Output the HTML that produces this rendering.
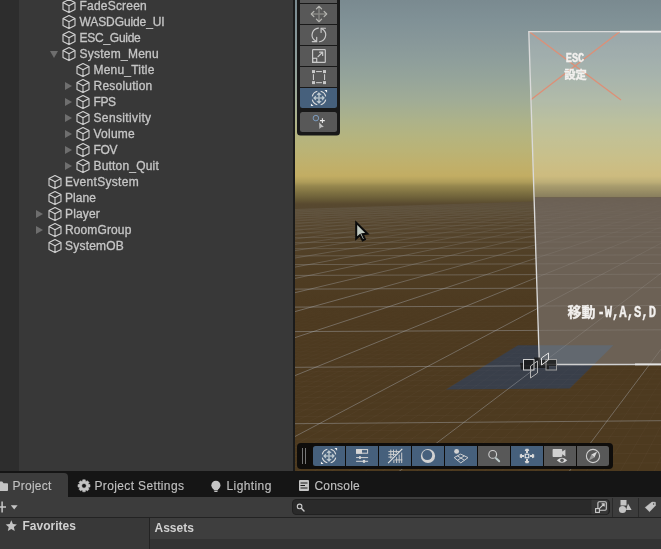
<!DOCTYPE html>
<html><head><meta charset="utf-8"><title>Unity</title>
<style>
html,body{margin:0;padding:0;}
body{width:661px;height:549px;overflow:hidden;background:#383838;position:relative;font-family:"Liberation Sans","Noto Sans CJK JP",sans-serif;font-size:12px;color:#c8c8c8;}
#hier,#tabs,#left,#ahead,#scenewrap{will-change:transform;}
#hier{position:absolute;left:0;top:0;width:293px;height:471px;background:#383838;overflow:hidden;}
#hier .strip{position:absolute;left:0;top:0;width:19px;height:471px;background:#2d2d2d;}
#vdiv{position:absolute;left:293px;top:0;width:2px;height:471px;background:#1b1b1b;}
.row{position:absolute;left:0;width:293px;height:16px;line-height:16px;white-space:nowrap;}
.row span{position:absolute;top:0;}
.row .nm{color:#c6c6c6;-webkit-text-stroke:0.3px #c6c6c6;}
.row .ico{width:16px;height:16px;}
.cube{width:16px;height:16px;display:block;}
.arr{width:0;height:0;}
.arr.r{top:4px !important;border-left:7.25px solid #6e6e6e;border-top:4.25px solid transparent;border-bottom:4.25px solid transparent;}
.arr.d{top:4.75px !important;border-top:7.75px solid #6e6e6e;border-left:4.25px solid transparent;border-right:4.25px solid transparent;}
#scenewrap{position:absolute;left:295px;top:0;width:366px;height:471px;overflow:hidden;}
#scene{display:block;}
#tabs{position:absolute;left:0;top:471px;width:661px;height:26px;background:#151515;}
#tabs .act{position:absolute;left:0;top:2px;width:68px;height:24px;background:#3c3c3c;border-top-right-radius:4px;}
#tabs .t{position:absolute;top:7px;line-height:16px;color:#c0c0c0;-webkit-text-stroke:0.12px #c0c0c0;white-space:nowrap;}
#ptool{position:absolute;left:0;top:497px;width:661px;height:20px;background:#3c3c3c;border-bottom:1px solid #232323;}
#search{position:absolute;left:292px;top:2px;width:316px;height:14px;border:1px solid #212121;border-radius:4px;background:#2a2a2a;}
#left{position:absolute;left:0;top:518px;width:149px;height:31px;background:#383838;}
#vd2{position:absolute;left:149px;top:518px;width:1px;height:31px;background:#232323;}
#ahead{position:absolute;left:150px;top:518px;width:511px;height:21px;background:#3e3e3e;}
#abody{position:absolute;left:150px;top:539px;width:511px;height:10px;background:#333333;}
.b{font-weight:bold;color:#d0d0d0;}
svg.ov{position:absolute;left:0;top:0;pointer-events:none;}
</style></head><body>
<div id="hier"><div class="strip"></div>
<div class="row" style="top:-2px">
<span class="ico" style="left:61.0px"><svg class="cube" viewBox="0 0 16 16"><path d="M8 1.6 L14 4.6 L14 11.4 L8 14.6 L2 11.4 L2 4.6 Z M2 4.6 L8 7.8 L14 4.6 M8 7.8 L8 14.6" fill="none" stroke="#d2d2d2" stroke-width="1.1" stroke-linejoin="round"/></svg></span>
<span class="nm" style="left:79.5px;letter-spacing:0.21px">FadeScreen</span>
</div>
<div class="row" style="top:14px">
<span class="ico" style="left:61.0px"><svg class="cube" viewBox="0 0 16 16"><path d="M8 1.6 L14 4.6 L14 11.4 L8 14.6 L2 11.4 L2 4.6 Z M2 4.6 L8 7.8 L14 4.6 M8 7.8 L8 14.6" fill="none" stroke="#d2d2d2" stroke-width="1.1" stroke-linejoin="round"/></svg></span>
<span class="nm" style="left:79.5px;letter-spacing:-0.1px">WASDGuide_UI</span>
</div>
<div class="row" style="top:30px">
<span class="ico" style="left:61.0px"><svg class="cube" viewBox="0 0 16 16"><path d="M8 1.6 L14 4.6 L14 11.4 L8 14.6 L2 11.4 L2 4.6 Z M2 4.6 L8 7.8 L14 4.6 M8 7.8 L8 14.6" fill="none" stroke="#d2d2d2" stroke-width="1.1" stroke-linejoin="round"/></svg></span>
<span class="nm" style="left:79.5px;letter-spacing:-0.26px">ESC_Guide</span>
</div>
<div class="row" style="top:46px">
<span class="arr d" style="left:49.5px"></span>
<span class="ico" style="left:61.0px"><svg class="cube" viewBox="0 0 16 16"><path d="M8 1.6 L14 4.6 L14 11.4 L8 14.6 L2 11.4 L2 4.6 Z M2 4.6 L8 7.8 L14 4.6 M8 7.8 L8 14.6" fill="none" stroke="#d2d2d2" stroke-width="1.1" stroke-linejoin="round"/></svg></span>
<span class="nm" style="left:79.5px;letter-spacing:0.25px">System_Menu</span>
</div>
<div class="row" style="top:62px">
<span class="ico" style="left:75.0px"><svg class="cube" viewBox="0 0 16 16"><path d="M8 1.6 L14 4.6 L14 11.4 L8 14.6 L2 11.4 L2 4.6 Z M2 4.6 L8 7.8 L14 4.6 M8 7.8 L8 14.6" fill="none" stroke="#d2d2d2" stroke-width="1.1" stroke-linejoin="round"/></svg></span>
<span class="nm" style="left:93.5px;letter-spacing:0.21px">Menu_Title</span>
</div>
<div class="row" style="top:78px">
<span class="arr r" style="left:64.5px"></span>
<span class="ico" style="left:75.0px"><svg class="cube" viewBox="0 0 16 16"><path d="M8 1.6 L14 4.6 L14 11.4 L8 14.6 L2 11.4 L2 4.6 Z M2 4.6 L8 7.8 L14 4.6 M8 7.8 L8 14.6" fill="none" stroke="#d2d2d2" stroke-width="1.1" stroke-linejoin="round"/></svg></span>
<span class="nm" style="left:93.5px;letter-spacing:0.23px">Resolution</span>
</div>
<div class="row" style="top:94px">
<span class="arr r" style="left:64.5px"></span>
<span class="ico" style="left:75.0px"><svg class="cube" viewBox="0 0 16 16"><path d="M8 1.6 L14 4.6 L14 11.4 L8 14.6 L2 11.4 L2 4.6 Z M2 4.6 L8 7.8 L14 4.6 M8 7.8 L8 14.6" fill="none" stroke="#d2d2d2" stroke-width="1.1" stroke-linejoin="round"/></svg></span>
<span class="nm" style="left:93.5px;letter-spacing:-0.45px">FPS</span>
</div>
<div class="row" style="top:110px">
<span class="arr r" style="left:64.5px"></span>
<span class="ico" style="left:75.0px"><svg class="cube" viewBox="0 0 16 16"><path d="M8 1.6 L14 4.6 L14 11.4 L8 14.6 L2 11.4 L2 4.6 Z M2 4.6 L8 7.8 L14 4.6 M8 7.8 L8 14.6" fill="none" stroke="#d2d2d2" stroke-width="1.1" stroke-linejoin="round"/></svg></span>
<span class="nm" style="left:93.5px;letter-spacing:0.36px">Sensitivity</span>
</div>
<div class="row" style="top:126px">
<span class="arr r" style="left:64.5px"></span>
<span class="ico" style="left:75.0px"><svg class="cube" viewBox="0 0 16 16"><path d="M8 1.6 L14 4.6 L14 11.4 L8 14.6 L2 11.4 L2 4.6 Z M2 4.6 L8 7.8 L14 4.6 M8 7.8 L8 14.6" fill="none" stroke="#d2d2d2" stroke-width="1.1" stroke-linejoin="round"/></svg></span>
<span class="nm" style="left:93.5px;letter-spacing:0.24px">Volume</span>
</div>
<div class="row" style="top:142px">
<span class="arr r" style="left:64.5px"></span>
<span class="ico" style="left:75.0px"><svg class="cube" viewBox="0 0 16 16"><path d="M8 1.6 L14 4.6 L14 11.4 L8 14.6 L2 11.4 L2 4.6 Z M2 4.6 L8 7.8 L14 4.6 M8 7.8 L8 14.6" fill="none" stroke="#d2d2d2" stroke-width="1.1" stroke-linejoin="round"/></svg></span>
<span class="nm" style="left:93.5px;letter-spacing:-0.39px">FOV</span>
</div>
<div class="row" style="top:158px">
<span class="arr r" style="left:64.5px"></span>
<span class="ico" style="left:75.0px"><svg class="cube" viewBox="0 0 16 16"><path d="M8 1.6 L14 4.6 L14 11.4 L8 14.6 L2 11.4 L2 4.6 Z M2 4.6 L8 7.8 L14 4.6 M8 7.8 L8 14.6" fill="none" stroke="#d2d2d2" stroke-width="1.1" stroke-linejoin="round"/></svg></span>
<span class="nm" style="left:93.5px;letter-spacing:0.19px">Button_Quit</span>
</div>
<div class="row" style="top:174px">
<span class="ico" style="left:46.5px"><svg class="cube" viewBox="0 0 16 16"><path d="M8 1.6 L14 4.6 L14 11.4 L8 14.6 L2 11.4 L2 4.6 Z M2 4.6 L8 7.8 L14 4.6 M8 7.8 L8 14.6" fill="none" stroke="#d2d2d2" stroke-width="1.1" stroke-linejoin="round"/></svg></span>
<span class="nm" style="left:65.0px;letter-spacing:0.3px">EventSystem</span>
</div>
<div class="row" style="top:190px">
<span class="ico" style="left:46.5px"><svg class="cube" viewBox="0 0 16 16"><path d="M8 1.6 L14 4.6 L14 11.4 L8 14.6 L2 11.4 L2 4.6 Z M2 4.6 L8 7.8 L14 4.6 M8 7.8 L8 14.6" fill="none" stroke="#d2d2d2" stroke-width="1.1" stroke-linejoin="round"/></svg></span>
<span class="nm" style="left:65.0px;letter-spacing:0.06px">Plane</span>
</div>
<div class="row" style="top:206px">
<span class="arr r" style="left:36.0px"></span>
<span class="ico" style="left:46.5px"><svg class="cube" viewBox="0 0 16 16"><path d="M8 1.6 L14 4.6 L14 11.4 L8 14.6 L2 11.4 L2 4.6 Z M2 4.6 L8 7.8 L14 4.6 M8 7.8 L8 14.6" fill="none" stroke="#d2d2d2" stroke-width="1.1" stroke-linejoin="round"/></svg></span>
<span class="nm" style="left:65.0px;letter-spacing:0.16px">Player</span>
</div>
<div class="row" style="top:222px">
<span class="arr r" style="left:36.0px"></span>
<span class="ico" style="left:46.5px"><svg class="cube" viewBox="0 0 16 16"><path d="M8 1.6 L14 4.6 L14 11.4 L8 14.6 L2 11.4 L2 4.6 Z M2 4.6 L8 7.8 L14 4.6 M8 7.8 L8 14.6" fill="none" stroke="#d2d2d2" stroke-width="1.1" stroke-linejoin="round"/></svg></span>
<span class="nm" style="left:65.0px;letter-spacing:0.12px">RoomGroup</span>
</div>
<div class="row" style="top:238px">
<span class="ico" style="left:46.5px"><svg class="cube" viewBox="0 0 16 16"><path d="M8 1.6 L14 4.6 L14 11.4 L8 14.6 L2 11.4 L2 4.6 Z M2 4.6 L8 7.8 L14 4.6 M8 7.8 L8 14.6" fill="none" stroke="#d2d2d2" stroke-width="1.1" stroke-linejoin="round"/></svg></span>
<span class="nm" style="left:65.0px;letter-spacing:0.21px">SystemOB</span>
</div>
</div>
<div id="vdiv"></div>
<div id="scenewrap">
<svg id="scene" width="366" height="471" viewBox="295 0 366 471">
<defs>
<linearGradient id="sky" x1="0" y1="0" x2="0" y2="214" gradientUnits="userSpaceOnUse">
<stop offset="0.0000" stop-color="#7a8a90"/>
<stop offset="0.0935" stop-color="#809196"/>
<stop offset="0.1869" stop-color="#879799"/>
<stop offset="0.2804" stop-color="#8e9e9b"/>
<stop offset="0.3738" stop-color="#96a59a"/>
<stop offset="0.4673" stop-color="#a0ac96"/>
<stop offset="0.5607" stop-color="#acb28a"/>
<stop offset="0.6308" stop-color="#b4b480"/>
<stop offset="0.7009" stop-color="#bab376"/>
<stop offset="0.7710" stop-color="#c0b06b"/>
<stop offset="0.8224" stop-color="#c2ad63"/>
<stop offset="0.8505" stop-color="#af9d5a"/>
<stop offset="0.8692" stop-color="#96874e"/>
<stop offset="0.8879" stop-color="#887a46"/>
<stop offset="0.9019" stop-color="#7d7041"/>
<stop offset="0.9299" stop-color="#695c37"/>
<stop offset="0.9533" stop-color="#58492f"/>
<stop offset="0.9766" stop-color="#56472f"/>
<stop offset="1.0000" stop-color="#56472f"/>
</linearGradient>
<linearGradient id="gnd" x1="0" y1="197" x2="0" y2="471" gradientUnits="userSpaceOnUse">
<stop offset="0.0000" stop-color="#5c4e38"/>
<stop offset="0.0365" stop-color="#5c4e38"/>
<stop offset="0.0584" stop-color="#5a4b34"/>
<stop offset="0.0912" stop-color="#57472f"/>
<stop offset="0.1569" stop-color="#534229"/>
<stop offset="0.2664" stop-color="#4f3d23"/>
<stop offset="0.4489" stop-color="#4d3a20"/>
<stop offset="1.0000" stop-color="#4d3a1f"/>
</linearGradient>
<linearGradient id="fade" x1="0" y1="200" x2="0" y2="300" gradientUnits="userSpaceOnUse">
<stop offset="0" stop-color="#fff" stop-opacity="0.0"/>
<stop offset="0.12" stop-color="#fff" stop-opacity="0.16"/>
<stop offset="0.3" stop-color="#fff" stop-opacity="0.3"/>
<stop offset="0.6" stop-color="#fff" stop-opacity="0.68"/>
<stop offset="1" stop-color="#fff" stop-opacity="1"/>
</linearGradient>
<linearGradient id="fade2" x1="0" y1="290" x2="0" y2="471" gradientUnits="userSpaceOnUse">
<stop offset="0" stop-color="#fff" stop-opacity="0"/>
<stop offset="0.5" stop-color="#fff" stop-opacity="0.7"/>
<stop offset="1" stop-color="#fff" stop-opacity="1"/>
</linearGradient>
<mask id="gm2"><rect x="295" y="205" width="366" height="266" fill="url(#fade2)"/></mask>
<mask id="gm"><rect x="295" y="195" width="366" height="276" fill="url(#fade)"/></mask>
<clipPath id="pc"><polygon points="534.5,197.3 661,197.3 661,365 540,365"/></clipPath>
<clipPath id="gc"><polygon points="295,209 661,197.5 661,471 295,471"/></clipPath>
</defs>
<rect x="295" y="0" width="366" height="214" fill="url(#sky)"/>
<polygon points="295,209 661,197.5 661,471 295,471" fill="url(#gnd)"/>
<polygon points="518,345.2 613.4,345.2 569.6,388.6 446,389.4" fill="#38404e" fill-opacity="0.93"/>
<g clip-path="url(#gc)">
<g mask="url(#gm2)" stroke="#c8c0b4" stroke-opacity="0.045" stroke-width="1" fill="none">
<line x1="295" y1="466.3" x2="661" y2="462.8"/>
<line x1="295" y1="456.7" x2="661" y2="453.3"/>
<line x1="295" y1="447.7" x2="661" y2="444.4"/>
<line x1="295" y1="439.2" x2="661" y2="436.0"/>
<line x1="295" y1="431.2" x2="661" y2="428.1"/>
<line x1="295" y1="416.6" x2="661" y2="413.7"/>
<line x1="295" y1="409.9" x2="661" y2="407.1"/>
<line x1="295" y1="403.6" x2="661" y2="400.9"/>
<line x1="295" y1="397.6" x2="661" y2="394.9"/>
<line x1="295" y1="391.9" x2="661" y2="389.3"/>
<line x1="295" y1="386.5" x2="661" y2="384.0"/>
<line x1="295" y1="381.4" x2="661" y2="378.9"/>
<line x1="295" y1="376.4" x2="661" y2="374.0"/>
<line x1="295" y1="371.8" x2="661" y2="369.4"/>
<line x1="295" y1="363.0" x2="661" y2="360.8"/>
<line x1="295" y1="358.9" x2="661" y2="356.7"/>
<line x1="295" y1="355.0" x2="661" y2="352.9"/>
<line x1="295" y1="351.3" x2="661" y2="349.1"/>
<line x1="295" y1="347.7" x2="661" y2="345.6"/>
<line x1="295" y1="344.2" x2="661" y2="342.2"/>
<line x1="295" y1="340.9" x2="661" y2="338.9"/>
<line x1="295" y1="337.7" x2="661" y2="335.7"/>
<line x1="295" y1="334.6" x2="661" y2="332.7"/>
<line x1="295" y1="328.8" x2="661" y2="326.9"/>
<line x1="295" y1="326.0" x2="661" y2="324.2"/>
<line x1="295" y1="323.4" x2="661" y2="321.6"/>
<line x1="295" y1="320.8" x2="661" y2="319.0"/>
<line x1="295" y1="318.3" x2="661" y2="316.6"/>
<line x1="295" y1="315.9" x2="661" y2="314.2"/>
<line x1="295" y1="313.6" x2="661" y2="311.9"/>
<line x1="295" y1="311.3" x2="661" y2="309.7"/>
<line x1="295" y1="309.2" x2="661" y2="307.6"/>
<line x1="295" y1="305.0" x2="661" y2="303.5"/>
<line x1="295" y1="303.0" x2="661" y2="301.5"/>
<line x1="295" y1="301.1" x2="661" y2="299.6"/>
<line x1="295" y1="299.2" x2="661" y2="297.7"/>
<line x1="295" y1="297.4" x2="661" y2="296.0"/>
<line x1="295" y1="295.7" x2="661" y2="294.2"/>
<line x1="295" y1="294.0" x2="661" y2="292.5"/>
<line x1="295" y1="292.3" x2="661" y2="290.9"/>
<line x1="295" y1="290.7" x2="661" y2="289.3"/>
<line x1="295" y1="2271.2" x2="793.0" y2="173.5"/>
<line x1="295" y1="1864.5" x2="793.0" y2="173.5"/>
<line x1="295" y1="1589.9" x2="793.0" y2="173.5"/>
<line x1="295" y1="1392.0" x2="793.0" y2="173.5"/>
<line x1="295" y1="1242.6" x2="793.0" y2="173.5"/>
<line x1="295" y1="1125.9" x2="793.0" y2="173.5"/>
<line x1="295" y1="1032.1" x2="793.0" y2="173.5"/>
<line x1="295" y1="955.2" x2="793.0" y2="173.5"/>
<line x1="295" y1="890.9" x2="793.0" y2="173.5"/>
<line x1="295" y1="789.5" x2="793.0" y2="173.5"/>
<line x1="295" y1="748.9" x2="793.0" y2="173.5"/>
<line x1="295" y1="713.3" x2="793.0" y2="173.5"/>
<line x1="295" y1="681.8" x2="793.0" y2="173.5"/>
<line x1="295" y1="653.8" x2="793.0" y2="173.5"/>
<line x1="295" y1="628.8" x2="793.0" y2="173.5"/>
<line x1="295" y1="606.2" x2="793.0" y2="173.5"/>
<line x1="295" y1="585.7" x2="793.0" y2="173.5"/>
<line x1="295" y1="567.1" x2="793.0" y2="173.5"/>
<line x1="295" y1="534.5" x2="793.0" y2="173.5"/>
<line x1="295" y1="520.2" x2="793.0" y2="173.5"/>
<line x1="295" y1="506.9" x2="793.0" y2="173.5"/>
<line x1="295" y1="494.6" x2="793.0" y2="173.5"/>
<line x1="295" y1="483.2" x2="793.0" y2="173.5"/>
<line x1="295" y1="472.6" x2="793.0" y2="173.5"/>
<line x1="295" y1="462.7" x2="793.0" y2="173.5"/>
<line x1="295" y1="453.4" x2="793.0" y2="173.5"/>
<line x1="295" y1="444.7" x2="793.0" y2="173.5"/>
<line x1="295" y1="428.8" x2="793.0" y2="173.5"/>
<line x1="295" y1="421.6" x2="793.0" y2="173.5"/>
<line x1="295" y1="414.7" x2="793.0" y2="173.5"/>
<line x1="295" y1="408.2" x2="793.0" y2="173.5"/>
<line x1="295" y1="402.1" x2="793.0" y2="173.5"/>
<line x1="295" y1="396.2" x2="793.0" y2="173.5"/>
<line x1="295" y1="390.7" x2="793.0" y2="173.5"/>
<line x1="295" y1="385.4" x2="793.0" y2="173.5"/>
<line x1="295" y1="380.4" x2="793.0" y2="173.5"/>
<line x1="295" y1="371.0" x2="793.0" y2="173.5"/>
<line x1="295" y1="366.6" x2="793.0" y2="173.5"/>
<line x1="295" y1="362.5" x2="793.0" y2="173.5"/>
<line x1="295" y1="358.4" x2="793.0" y2="173.5"/>
<line x1="295" y1="354.6" x2="793.0" y2="173.5"/>
<line x1="295" y1="350.9" x2="793.0" y2="173.5"/>
<line x1="295" y1="347.4" x2="793.0" y2="173.5"/>
<line x1="295" y1="344.0" x2="793.0" y2="173.5"/>
<line x1="295" y1="340.7" x2="793.0" y2="173.5"/>
<line x1="295" y1="334.5" x2="793.0" y2="173.5"/>
<line x1="295" y1="331.6" x2="793.0" y2="173.5"/>
<line x1="295" y1="328.8" x2="793.0" y2="173.5"/>
<line x1="295" y1="326.1" x2="793.0" y2="173.5"/>
<line x1="295" y1="323.5" x2="793.0" y2="173.5"/>
<line x1="295" y1="320.9" x2="793.0" y2="173.5"/>
<line x1="295" y1="318.5" x2="793.0" y2="173.5"/>
<line x1="295" y1="316.1" x2="793.0" y2="173.5"/>
<line x1="295" y1="313.8" x2="793.0" y2="173.5"/>
<line x1="295" y1="309.4" x2="793.0" y2="173.5"/>
<line x1="295" y1="307.4" x2="793.0" y2="173.5"/>
<line x1="295" y1="305.3" x2="793.0" y2="173.5"/>
<line x1="295" y1="303.4" x2="793.0" y2="173.5"/>
<line x1="295" y1="301.5" x2="793.0" y2="173.5"/>
<line x1="295" y1="299.6" x2="793.0" y2="173.5"/>
<line x1="295" y1="297.8" x2="793.0" y2="173.5"/>
<line x1="295" y1="296.1" x2="793.0" y2="173.5"/>
<line x1="295" y1="294.4" x2="793.0" y2="173.5"/>
<line x1="295" y1="291.1" x2="793.0" y2="173.5"/>
<line x1="295" y1="289.5" x2="793.0" y2="173.5"/>
<line x1="295" y1="288.0" x2="793.0" y2="173.5"/>
<line x1="295" y1="286.5" x2="793.0" y2="173.5"/>
<line x1="295" y1="285.1" x2="793.0" y2="173.5"/>
<line x1="295" y1="283.7" x2="793.0" y2="173.5"/>
<line x1="295" y1="282.3" x2="793.0" y2="173.5"/>
<line x1="295" y1="281.0" x2="793.0" y2="173.5"/>
<line x1="295" y1="279.7" x2="793.0" y2="173.5"/>
<line x1="295" y1="277.1" x2="793.0" y2="173.5"/>
<line x1="295" y1="275.9" x2="793.0" y2="173.5"/>
<line x1="295" y1="274.7" x2="793.0" y2="173.5"/>
<line x1="295" y1="273.6" x2="793.0" y2="173.5"/>
<line x1="295" y1="272.4" x2="793.0" y2="173.5"/>
<line x1="295" y1="271.3" x2="793.0" y2="173.5"/>
<line x1="295" y1="270.2" x2="793.0" y2="173.5"/>
<line x1="295" y1="269.2" x2="793.0" y2="173.5"/>
<line x1="295" y1="268.1" x2="793.0" y2="173.5"/>
</g>
<g mask="url(#gm)" stroke="#a8aab0" stroke-opacity="0.44" stroke-width="1" fill="none">
<line x1="295" y1="423.7" x2="661" y2="420.7"/>
<line x1="295" y1="367.3" x2="661" y2="365.0"/>
<line x1="295" y1="331.6" x2="661" y2="329.8"/>
<line x1="295" y1="307.1" x2="661" y2="305.5"/>
<line x1="295" y1="289.1" x2="661" y2="287.7"/>
<line x1="295" y1="275.4" x2="661" y2="274.2"/>
<line x1="295" y1="264.6" x2="661" y2="263.5"/>
<line x1="295" y1="255.9" x2="661" y2="254.9"/>
<line x1="295" y1="248.7" x2="661" y2="247.8"/>
<line x1="295" y1="242.6" x2="661" y2="241.8"/>
<line x1="295" y1="237.5" x2="661" y2="236.7"/>
<line x1="295" y1="233.0" x2="661" y2="232.3"/>
<line x1="295" y1="229.2" x2="661" y2="228.5"/>
<line x1="295" y1="225.8" x2="661" y2="225.2"/>
<line x1="295" y1="222.8" x2="661" y2="222.2"/>
<line x1="295" y1="220.1" x2="661" y2="219.6"/>
<line x1="295" y1="217.7" x2="661" y2="217.2"/>
<line x1="295" y1="215.6" x2="661" y2="215.1"/>
<line x1="295" y1="213.6" x2="661" y2="213.1"/>
<line x1="295" y1="211.8" x2="661" y2="211.4"/>
<line x1="295" y1="210.2" x2="661" y2="209.7"/>
<line x1="295" y1="208.7" x2="661" y2="208.3"/>
<line x1="295" y1="207.3" x2="661" y2="206.9"/>
<line x1="295" y1="206.0" x2="661" y2="205.6"/>
<line x1="295" y1="204.8" x2="661" y2="204.5"/>
<line x1="295" y1="203.7" x2="661" y2="203.4"/>
<line x1="295" y1="202.7" x2="661" y2="202.4"/>
<line x1="295" y1="201.7" x2="661" y2="201.4"/>
<line x1="295" y1="200.8" x2="661" y2="200.5"/>
<line x1="295" y1="836.4" x2="793.0" y2="173.5"/>
<line x1="295" y1="550.1" x2="793.0" y2="173.5"/>
<line x1="295" y1="436.5" x2="793.0" y2="173.5"/>
<line x1="295" y1="375.6" x2="793.0" y2="173.5"/>
<line x1="295" y1="337.6" x2="793.0" y2="173.5"/>
<line x1="295" y1="311.6" x2="793.0" y2="173.5"/>
<line x1="295" y1="292.7" x2="793.0" y2="173.5"/>
<line x1="295" y1="278.4" x2="793.0" y2="173.5"/>
<line x1="295" y1="267.1" x2="793.0" y2="173.5"/>
<line x1="295" y1="258.0" x2="793.0" y2="173.5"/>
<line x1="295" y1="250.6" x2="793.0" y2="173.5"/>
<line x1="295" y1="244.3" x2="793.0" y2="173.5"/>
<line x1="295" y1="239.0" x2="793.0" y2="173.5"/>
<line x1="295" y1="234.4" x2="793.0" y2="173.5"/>
<line x1="295" y1="230.4" x2="793.0" y2="173.5"/>
<line x1="295" y1="227.0" x2="793.0" y2="173.5"/>
<line x1="295" y1="223.9" x2="793.0" y2="173.5"/>
<line x1="295" y1="221.1" x2="793.0" y2="173.5"/>
<line x1="295" y1="218.7" x2="793.0" y2="173.5"/>
<line x1="295" y1="216.4" x2="793.0" y2="173.5"/>
<line x1="295" y1="214.4" x2="793.0" y2="173.5"/>
<line x1="295" y1="212.6" x2="793.0" y2="173.5"/>
<line x1="295" y1="210.9" x2="793.0" y2="173.5"/>
<line x1="295" y1="209.4" x2="793.0" y2="173.5"/>
<line x1="295" y1="208.0" x2="793.0" y2="173.5"/>
<line x1="295" y1="206.6" x2="793.0" y2="173.5"/>
<line x1="295" y1="205.4" x2="793.0" y2="173.5"/>
<line x1="295" y1="204.3" x2="793.0" y2="173.5"/>
<line x1="295" y1="203.3" x2="793.0" y2="173.5"/>
<line x1="295" y1="202.3" x2="793.0" y2="173.5"/>
<line x1="295" y1="201.4" x2="793.0" y2="173.5"/>
<line x1="295" y1="200.5" x2="793.0" y2="173.5"/>
</g></g>
<polygon points="529,31 661,31 661,197.3 534.5,197.3" fill="#ffffff" fill-opacity="0.18"/>
<polygon points="534.5,197.3 661,197.3 661,365 540,365" fill="#6c6155"/>
<polygon clip-path="url(#pc)" points="518,345.2 613.4,345.2 569.6,388.6 446,389.4" fill="#62686f"/>
<g clip-path="url(#pc)">
<g mask="url(#gm)" stroke="#c4c4c6" stroke-opacity="0.17" stroke-width="1" fill="none">
<line x1="295" y1="423.7" x2="661" y2="420.7"/>
<line x1="295" y1="367.3" x2="661" y2="365.0"/>
<line x1="295" y1="331.6" x2="661" y2="329.8"/>
<line x1="295" y1="307.1" x2="661" y2="305.5"/>
<line x1="295" y1="289.1" x2="661" y2="287.7"/>
<line x1="295" y1="275.4" x2="661" y2="274.2"/>
<line x1="295" y1="264.6" x2="661" y2="263.5"/>
<line x1="295" y1="255.9" x2="661" y2="254.9"/>
<line x1="295" y1="248.7" x2="661" y2="247.8"/>
<line x1="295" y1="242.6" x2="661" y2="241.8"/>
<line x1="295" y1="237.5" x2="661" y2="236.7"/>
<line x1="295" y1="233.0" x2="661" y2="232.3"/>
<line x1="295" y1="229.2" x2="661" y2="228.5"/>
<line x1="295" y1="225.8" x2="661" y2="225.2"/>
<line x1="295" y1="222.8" x2="661" y2="222.2"/>
<line x1="295" y1="220.1" x2="661" y2="219.6"/>
<line x1="295" y1="217.7" x2="661" y2="217.2"/>
<line x1="295" y1="215.6" x2="661" y2="215.1"/>
<line x1="295" y1="213.6" x2="661" y2="213.1"/>
<line x1="295" y1="211.8" x2="661" y2="211.4"/>
<line x1="295" y1="210.2" x2="661" y2="209.7"/>
<line x1="295" y1="208.7" x2="661" y2="208.3"/>
<line x1="295" y1="207.3" x2="661" y2="206.9"/>
<line x1="295" y1="206.0" x2="661" y2="205.6"/>
<line x1="295" y1="204.8" x2="661" y2="204.5"/>
<line x1="295" y1="203.7" x2="661" y2="203.4"/>
<line x1="295" y1="202.7" x2="661" y2="202.4"/>
<line x1="295" y1="201.7" x2="661" y2="201.4"/>
<line x1="295" y1="200.8" x2="661" y2="200.5"/>
<line x1="295" y1="836.4" x2="793.0" y2="173.5"/>
<line x1="295" y1="550.1" x2="793.0" y2="173.5"/>
<line x1="295" y1="436.5" x2="793.0" y2="173.5"/>
<line x1="295" y1="375.6" x2="793.0" y2="173.5"/>
<line x1="295" y1="337.6" x2="793.0" y2="173.5"/>
<line x1="295" y1="311.6" x2="793.0" y2="173.5"/>
<line x1="295" y1="292.7" x2="793.0" y2="173.5"/>
<line x1="295" y1="278.4" x2="793.0" y2="173.5"/>
<line x1="295" y1="267.1" x2="793.0" y2="173.5"/>
<line x1="295" y1="258.0" x2="793.0" y2="173.5"/>
<line x1="295" y1="250.6" x2="793.0" y2="173.5"/>
<line x1="295" y1="244.3" x2="793.0" y2="173.5"/>
<line x1="295" y1="239.0" x2="793.0" y2="173.5"/>
<line x1="295" y1="234.4" x2="793.0" y2="173.5"/>
<line x1="295" y1="230.4" x2="793.0" y2="173.5"/>
<line x1="295" y1="227.0" x2="793.0" y2="173.5"/>
<line x1="295" y1="223.9" x2="793.0" y2="173.5"/>
<line x1="295" y1="221.1" x2="793.0" y2="173.5"/>
<line x1="295" y1="218.7" x2="793.0" y2="173.5"/>
<line x1="295" y1="216.4" x2="793.0" y2="173.5"/>
<line x1="295" y1="214.4" x2="793.0" y2="173.5"/>
<line x1="295" y1="212.6" x2="793.0" y2="173.5"/>
<line x1="295" y1="210.9" x2="793.0" y2="173.5"/>
<line x1="295" y1="209.4" x2="793.0" y2="173.5"/>
<line x1="295" y1="208.0" x2="793.0" y2="173.5"/>
<line x1="295" y1="206.6" x2="793.0" y2="173.5"/>
<line x1="295" y1="205.4" x2="793.0" y2="173.5"/>
<line x1="295" y1="204.3" x2="793.0" y2="173.5"/>
<line x1="295" y1="203.3" x2="793.0" y2="173.5"/>
<line x1="295" y1="202.3" x2="793.0" y2="173.5"/>
<line x1="295" y1="201.4" x2="793.0" y2="173.5"/>
<line x1="295" y1="200.5" x2="793.0" y2="173.5"/>
</g></g>
<g stroke="#de8f76" stroke-width="1.3"><line x1="529" y1="31.5" x2="621" y2="100"/><line x1="620" y1="31.5" x2="530.5" y2="100"/></g>
<g stroke="#dadada" stroke-width="1.35" fill="none"><polyline points="661,31.6 528.8,31.6 539.4,364.5"/><polyline points="539.4,364.4 661,364.4" stroke-width="1.2" stroke="#d0d0d0"/><polyline points="620,31.6 661,31.6" stroke-width="1.9" stroke="#ececec"/><polyline points="635,364.4 661,364.4" stroke-width="1.8" stroke="#e4e4e4"/></g>
<g font-family="'Liberation Mono','Noto Sans CJK JP',monospace" font-weight="bold" fill="#f2f0ee" stroke="#f2f0ee" stroke-width="0.35">
<text x="575" y="61.8" font-size="12" text-anchor="middle" textLength="18.6" lengthAdjust="spacingAndGlyphs">ESC</text>
<text x="575.5" y="79.3" font-size="11.3" text-anchor="middle" font-family="'Noto Sans CJK JP',sans-serif">設定</text>
<text x="567.6" y="316.8" font-size="14" font-family="'Noto Sans CJK JP',sans-serif">移動</text>
<text x="597.4" y="317.4" font-size="16.5" textLength="58.6" lengthAdjust="spacingAndGlyphs">-W,A,S,D</text>
</g>
<g fill="none" stroke="#d2d2d2" stroke-width="1">
<path d="M520 363 H524 V360 H534 V357.5 H540 V360 H557 V366 H549 V369.5 H546 V368 H533 V369.5 H521 Z" fill="#161616" fill-opacity="0.8" stroke="none"/>
<rect x="523.5" y="359.5" width="10.5" height="10.5" stroke="#cfcfcf"/>
<rect x="546" y="359.5" width="10.5" height="10.5" stroke="#9c9c9c"/>
<polygon points="530.5,366 537.5,361 537.5,373 530.5,378" stroke="#b4b4b4"/>
<polygon points="541.5,358 548.5,353 548.5,360 541.5,365" stroke="#e0e0e0"/>
</g>
<path d="M356.2 222.6 L356.2 238.6 L360 235.2 L362.7 240.4 L365 239.3 L362.6 234.2 L367.4 233.8 Z" fill="#c0c9c1" stroke="#0c0c0c" stroke-width="2" stroke-linejoin="miter"/>
</svg>
</div>
<div id="tabs"><div class="act"></div>
<span class="t" style="left:12.5px;letter-spacing:0.25px">Project</span>
<span class="t" style="left:94.5px;letter-spacing:0.36px">Project Settings</span>
<span class="t" style="left:226.5px;letter-spacing:0.4px">Lighting</span>
<span class="t" style="left:314.5px;letter-spacing:0.2px">Console</span>
</div>
<div id="ptool"><div id="search"></div></div>
<div id="left"><span class="b" style="position:absolute;left:22.5px;top:1px;line-height:15px">Favorites</span></div>
<div id="vd2"></div>
<div id="ahead"><span class="b" style="position:absolute;left:4.5px;top:3.2px;line-height:15px">Assets</span></div>
<div id="abody"></div>
<svg class="ov" width="661" height="549" viewBox="0 0 661 549">
<rect x="297" y="-6" width="43" height="141.5" rx="3.5" fill="#191919"/>
<rect x="300" y="-17" width="37" height="20" fill="#585858"/>
<rect x="300" y="4" width="37" height="20" fill="#585858"/>
<rect x="300" y="25" width="37" height="20" fill="#585858"/>
<rect x="300" y="46" width="37" height="20" fill="#585858"/>
<rect x="300" y="67" width="37" height="20" fill="#585858"/>
<path d="M300 88 H337 V105.5 Q337 108 334.5 108 H302.5 Q300 108 300 105.5 Z" fill="#46607c"/>
<rect x="300" y="112" width="37" height="20" rx="2.5" fill="#585858"/>
<path d="M312.3 14 H325.7 M319 7.3 V20.7" fill="none" stroke="#868683" stroke-width="1.4"/><path d="M316.4 8.9 L319 6.3 L321.6 8.9 M316.4 19.099999999999998 L319 21.7 L321.6 19.099999999999998 M313.90000000000003 11.4 L311.3 14 L313.90000000000003 16.6 M324.09999999999997 11.4 L326.7 14 L324.09999999999997 16.6" fill="none" stroke="#b6b6b2" stroke-width="1.25" stroke-linejoin="round" stroke-linecap="round"/>
<g fill="none" stroke="#c9c9c9" stroke-width="1.15" stroke-linecap="round" stroke-linejoin="round">
<path d="M318.4 28.1 A6.9 6.9 0 0 0 314.4 40.1 L316.4 41.3"/>
<path d="M312.3 41.6 H316.7 V37.3" stroke-linejoin="miter"/>
<path d="M319.4 41.7 A6.9 6.9 0 0 0 323.4 29.7 L321.4 28.5"/>
<path d="M325.5 28.2 H321.1 V32.5" stroke-linejoin="miter"/>
</g>
<g fill="none" stroke="#c9c9c9" stroke-width="1.2" stroke-linejoin="miter">
<rect x="312.6" y="49.7" width="12.7" height="12.7" rx="0.6"/>
<rect x="312.6" y="58.3" width="4.1" height="4.1"/>
<path d="M318 56.7 L322.4 52.4 M319.6 52.2 H322.7 V55.4" stroke-linecap="round"/>
</g>
<g fill="#c9c9c9" stroke="none">
<rect x="312" y="70.1" width="3" height="3"/><rect x="323" y="70.1" width="3" height="3"/>
<rect x="312" y="81.1" width="3" height="3"/><rect x="323" y="81.1" width="3" height="3"/>
<rect x="316.1" y="71.0" width="5.8" height="1.1"/><rect x="316.1" y="82.1" width="5.8" height="1.1"/>
<rect x="312.9" y="74.19999999999999" width="1.1" height="5.8"/><rect x="324" y="74.19999999999999" width="1.1" height="5.8"/>
</g>
<g fill="none" stroke="#dedede" stroke-width="1.15"><path d="M325.70 99.67 A6.9 6.9 0 0 1 320.67 104.70"/><path d="M317.33 104.70 A6.9 6.9 0 0 1 312.30 99.67"/><path d="M312.30 96.33 A6.9 6.9 0 0 1 317.33 91.30"/><path d="M320.67 91.30 A6.9 6.9 0 0 1 325.70 96.33"/></g><path d="M315.7 98 H322.3 M319 94.7 V101.3" fill="none" stroke="#a9b7c0" stroke-width="1.6"/><path d="M316.8 94.7 L319 92.5 L321.2 94.7 Z M316.8 101.3 L319 103.5 L321.2 101.3 Z M315.7 95.8 L313.5 98 L315.7 100.2 Z M322.3 95.8 L324.5 98 L322.3 100.2 Z" fill="#c8d2d8" stroke="#c8d2d8" stroke-width="0.5" stroke-linejoin="round"/><path d="M324.4 90.1 H327.1 V92.8 Z M313.6 106.1 H310.9 V103.4 Z" fill="#f2f2f2"/>
<g>
<circle cx="315.9" cy="118.1" r="2.75" fill="none" stroke="#7d9fc4" stroke-width="0.95"/>
<path d="M322.4 118.2 V123 M320 120.6 H324.8" stroke="#ececec" stroke-width="1.05" fill="none"/>
<path d="M319.1 122.3 L323.9 126.9 L321.2 127.2 L319.4 129 Z" fill="#bebebe"/>
</g>
<rect x="297" y="443" width="316" height="26" rx="4" fill="#0f0d0b"/>
<path d="M302.5 448 V464 M305.5 448 V464" stroke="#767676" stroke-width="1" fill="none"/>
<path d="M315.5 446 H345 V466 H315.5 Q313 466 313 463.5 V448.5 Q313 446 315.5 446 Z" fill="#46607c"/>
<rect x="346" y="446" width="32" height="20" fill="#46607c"/>
<rect x="379" y="446" width="32" height="20" fill="#46607c"/>
<rect x="412" y="446" width="32" height="20" fill="#46607c"/>
<rect x="445" y="446" width="32" height="20" fill="#46607c"/>
<rect x="478" y="446" width="32" height="20" fill="#585858"/>
<rect x="511" y="446" width="32" height="20" fill="#46607c"/>
<rect x="544" y="446" width="32" height="20" fill="#585858"/>
<path d="M577 446 H606.5 Q609 446 609 448.5 V463.5 Q609 466 606.5 466 H577 Z" fill="#585858"/>
<g fill="none" stroke="#dedede" stroke-width="1.15"><path d="M335.70 457.67 A6.9 6.9 0 0 1 330.67 462.70"/><path d="M327.33 462.70 A6.9 6.9 0 0 1 322.30 457.67"/><path d="M322.30 454.33 A6.9 6.9 0 0 1 327.33 449.30"/><path d="M330.67 449.30 A6.9 6.9 0 0 1 335.70 454.33"/></g><path d="M325.7 456 H332.3 M329 452.7 V459.3" fill="none" stroke="#a9b7c0" stroke-width="1.6"/><path d="M326.8 452.7 L329 450.5 L331.2 452.7 Z M326.8 459.3 L329 461.5 L331.2 459.3 Z M325.7 453.8 L323.5 456 L325.7 458.2 Z M332.3 453.8 L334.5 456 L332.3 458.2 Z" fill="#c8d2d8" stroke="#c8d2d8" stroke-width="0.5" stroke-linejoin="round"/><path d="M334.4 448.1 H337.1 V450.8 Z M323.6 464.1 H320.9 V461.4 Z" fill="#f2f2f2"/>
<g>
<rect x="356.6" y="449.6" width="11" height="3.6" fill="#46607c" stroke="#d6d6d6" stroke-width="1"/>
<rect x="356.1" y="449.1" width="5.9" height="4.6" fill="#d6d6d6"/>
<path d="M356.1 457.6 H368.1 M356.1 461.3 H368.1" stroke="#d6d6d6" stroke-width="1"/>
<rect x="359" y="456.2" width="1.9" height="2.7" fill="#d6d6d6"/>
<rect x="362.9" y="459.9" width="2.2" height="2.9" fill="#d6d6d6"/>
</g>
<g stroke="#d0d0d0" stroke-width="0.95" fill="none">
<path d="M388.4 451.6 H399 M388.4 454.4 H396 M388.4 457.1 H392.8"/>
<path d="M390.8 449.6 V458.6 M393.5 449.6 V456 M396.3 449.6 V453.2"/>
<path d="M393.9 459.8 V463 M396.6 457.2 V463 M399.2 454.6 V463 M401.7 452.6 V463"/>
<path d="M394.6 459.9 H402.3"/>
<path d="M388.1 463.1 L402.3 448.9" stroke-width="1.15" stroke="#e2e2e2"/>
</g>
<g>
<circle cx="428" cy="456" r="7.1" fill="#d2d2d2"/>
<circle cx="427.25" cy="455.1" r="5.0" fill="#46607c"/>
</g>
<g>
<circle cx="456.6" cy="451.4" r="2.45" fill="#d4d4d4"/>
<path d="M454.2 457.6 L460.6 454.1 L468 457.6 L460.8 462.9 Z M457.40 455.85 L464.40 460.25 M457.50 460.25 L464.30 455.85" fill="none" stroke="#d4d4d4" stroke-width="0.95"/>
</g>
<g fill="none">
<circle cx="492.7" cy="454.4" r="3.9" stroke-width="1.1" stroke="#d0d0d0"/>
<path d="M496 458.2 L499.2 461.3" stroke-width="1.9" stroke-linecap="round" stroke="#bccaca"/>
</g>
<g fill="#d8d8d8">
<rect x="525.2" y="454.2" width="3.6" height="3.6" fill="none" stroke="#e8e8e8" stroke-width="1.1"/>
<path d="M526 453 V451 H524.7 L525.6 448.8 H528.4 L529.3 451 H528 V453 Z"/>
<path d="M526 459 V461 H524.7 L525.6 463.2 H528.4 L529.3 461 H528 V459 Z"/>
<path d="M524 455 H522 V453.7 L519.8 454.6 V457.4 L522 458.3 V457 H524 Z"/>
<path d="M530 455 H532 V453.7 L534.2 454.6 V457.4 L532 458.3 V457 H530 Z"/>
</g>
<g fill="#d0d0d0">
<path d="M553.4 449 H561.4 Q562.2 449 562.2 449.8 V451.6 L565.4 449.4 V456.4 L562.2 454.2 V456.2 Q562.2 457 561.4 457 H553.4 Q552.6 457 552.6 456.2 V449.8 Q552.6 449 553.4 449 Z"/>
<path d="M555.6 460.2 Q562 453.4 568.4 460.2 Q562 467 555.6 460.2 Z" fill="#585858"/>
<path d="M556.8 460.2 Q562 455.1 567.2 460.2 Q562 465.3 556.8 460.2 Z" fill="#dadada"/>
<circle cx="562" cy="460.3" r="1.75" fill="#585858"/>
</g>
<g>
<circle cx="593" cy="456" r="6.6" fill="none" stroke="#cfcfcf" stroke-width="1.1"/>
<path d="M597.2 451.6 L594.4 457.6 L591.4 454.6 Z" fill="#d8d8d8"/>
<path d="M588.8 460.4 L594.4 457.6 L591.4 454.6 Z" fill="#9a9a9a"/>
</g>
<path d="M-4 481.5 H2.2 L3.6 483.2 H7.2 Q8 483.2 8 484 V490.2 Q8 491 7.2 491 H-4 Z" fill="#c4c4c4"/>
<path d="M89.97 484.53 L89.97 487.07 L88.48 487.23 L88.18 487.95 L89.12 489.12 L87.32 490.92 L86.15 489.98 L85.43 490.28 L85.27 491.77 L82.73 491.77 L82.57 490.28 L81.85 489.98 L80.68 490.92 L78.88 489.12 L79.82 487.95 L79.52 487.23 L78.03 487.07 L78.03 484.53 L79.52 484.37 L79.82 483.65 L78.88 482.48 L80.68 480.68 L81.85 481.62 L82.57 481.32 L82.73 479.83 L85.27 479.83 L85.43 481.32 L86.15 481.62 L87.32 480.68 L89.12 482.48 L88.18 483.65 L88.48 484.37 Z M86.35 485.8 A2.35 2.35 0 1 0 81.65 485.8 A2.35 2.35 0 1 0 86.35 485.8 Z" fill="#c4c4c4" fill-rule="evenodd" stroke="#c4c4c4" stroke-width="0.6" stroke-linejoin="round"/>
<circle cx="215.9" cy="485.2" r="4.55" fill="#c4c4c4"/><rect x="213.7" y="488" width="4.4" height="2.3" fill="#c4c4c4"/><rect x="214.2" y="490.8" width="3.4" height="1.1" rx="0.4" fill="#c4c4c4"/>
<g><rect x="299" y="480" width="10" height="11" rx="1" fill="#c4c4c4"/>
<path d="M300.5 483 H307.5 M300.5 485.5 H305 M300.5 488 H307.5" stroke="#191919" stroke-width="1"/></g>
<path d="M-2 507 H6 M2.1 501.4 V512.6" stroke="#c8c8c8" stroke-width="1.5" fill="none"/>
<path d="M10.8 505.2 H17.6 L14.2 509.6 Z" fill="#c4c4c4"/>
<g fill="none" stroke="#c8c8c8"><circle cx="299.6" cy="506.4" r="2.3" stroke-width="1.1"/><path d="M301.3 508.2 L304 511" stroke-width="1.4" stroke-linecap="round"/></g>
<path d="M591.5 499.8 H605.5 Q608.2 499.8 608.2 502.5 V511.5 Q608.2 514.2 605.5 514.2 H591.5 Z" fill="#363636"/>
<g fill="none" stroke="#cdcdcd" stroke-width="1.1"><rect x="597.9" y="501.8" width="8.4" height="8.4" rx="1.2"/>
<rect x="595.6" y="508.6" width="3.8" height="3.8" fill="#363636"/><path d="M599.6 508.4 L604 504 M601.6 503.9 H604.2 V506.5"/></g>
<path d="M612.5 498 V517 M638.5 498 V517" stroke="#2a2a2a" stroke-width="1"/>
<g fill="#c4c4c4"><rect x="620.5" y="500" width="6" height="5.5"/><circle cx="622.5" cy="509.5" r="3.6"/><path d="M628 503.5 L631.6 510 H626 Z"/></g>
<path d="M645.2 507.4 L652 502.1 L655.4 502.3 L655.5 505.6 L649.5 511.7 Z" fill="#c4c4c4" stroke="#c4c4c4" stroke-width="0.5" stroke-linejoin="round"/><circle cx="653.6" cy="504.1" r="0.75" fill="#3c3c3c"/>
<polygon points="11.30,520.30 12.89,524.02 16.91,524.38 13.87,527.03 14.77,530.97 11.30,528.90 7.83,530.97 8.73,527.03 5.69,524.38 9.71,524.02" fill="#c4c4c4"/>
</svg>
</body></html>
